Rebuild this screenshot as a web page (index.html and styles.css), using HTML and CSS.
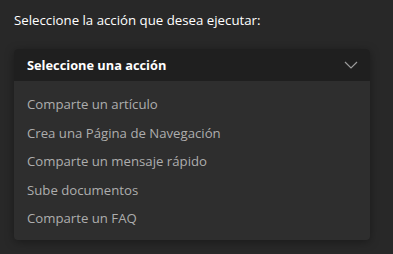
FILE: index.html
```html
<!DOCTYPE html>
<html lang="es">
<head>
<meta charset="utf-8">
<link rel="stylesheet" href="styles.css">
</head>
<body>
<div class="panel">
  <label class="prompt">Seleccione la acción que desea ejecutar:</label>
  <div class="dropdown">
    <div class="dropdown-header">
      <span class="dropdown-value">Seleccione una acción</span>
      <svg class="chevron" width="14" height="8" viewBox="0 0 14 8"><path d="M1 1 L7 7 L13 1" fill="none" stroke="#9a9a9a" stroke-width="1.2"/></svg>
    </div>
    <ul class="dropdown-list">
      <li class="option">Comparte un artículo</li>
      <li class="option">Crea una Página de Navegación</li>
      <li class="option">Comparte un mensaje rápido</li>
      <li class="option">Sube documentos</li>
      <li class="option">Comparte un FAQ</li>
    </ul>
  </div>
</div>
</body>
</html>
```
FILE: styles.css
```css
html, body {
  margin: 0;
  padding: 0;
  background: #282828;
  font-family: "Open Sans", "Noto Sans", sans-serif;
}
.panel {
  padding: 10px 23px 0 14px;
  height: 254px;
  box-sizing: border-box;
}
.prompt {
  display: block;
  color: #ffffff;
  font-size: 13.25px;
  line-height: 20px;
  margin-bottom: 19px;
}
.dropdown {
  border-radius: 4px;
  box-shadow: 0 2px 10px rgba(0,0,0,0.35);
  background: #2e2e2e;
  overflow: hidden;
}
.dropdown-header {
  display: flex;
  align-items: center;
  justify-content: space-between;
  height: 32px;
  padding: 0 12px 0 13px;
  background: #1f1f1f;
}
.dropdown-value {
  color: #ffffff;
  font-weight: 700;
  font-size: 12.8px;
}
.chevron {
  display: block;
}
.dropdown-list {
  list-style: none;
  margin: 0;
  padding: 9px 0 7.5px;
}
.option {
  height: 28.5px;
  line-height: 28.5px;
  padding-left: 13px;
  color: #adadad;
  font-size: 13.2px;
}
```
